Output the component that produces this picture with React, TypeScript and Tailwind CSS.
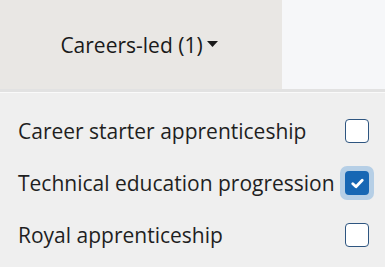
const items = [
  { label: 'Career starter apprenticeship', checked: false },
  { label: 'Technical education progression', checked: true },
  { label: 'Royal apprenticeship', checked: false },
];

const Checkbox = ({ checked }: { checked: boolean }) => {
  if (checked) {
    return (
      <span className="flex h-[34px] w-[34px] shrink-0 items-center justify-center rounded-[7px] bg-[#b6cfe6]">
        <span className="flex h-[24px] w-[24px] items-center justify-center rounded-[4px] bg-[#1767b4]">
          <svg width="13" height="11" viewBox="0 0 13 11" fill="none">
            <path d="M1.8 5.8 L5 8.8 L11.2 2.2" stroke="white" strokeWidth="2.8" strokeLinecap="round" strokeLinejoin="round" />
          </svg>
        </span>
      </span>
    );
  }
  return (
    <span className="flex h-[34px] w-[34px] shrink-0 items-center justify-center">
      <span className="h-[24px] w-[24px] rounded-[4px] border border-[#2e5580] bg-white" />
    </span>
  );
};

export default function App() {
  return (
    <div className="h-[267px] w-[385px] overflow-hidden bg-[#efefef] font-['Open_Sans',sans-serif] text-[#1f1f1f]">
      <div className="flex h-[89px]">
        <div className="flex w-[282px] items-center justify-center bg-[#e9e7e4] pr-[4px] pt-[2px]">
          <span className="text-[21px] text-[#1a1a1a]">Careers-led (1)</span>
          <svg className="ml-[4px] mt-[-3px]" width="11" height="6" viewBox="0 0 11 6">
            <path d="M0 0 H11 L5.5 6 Z" fill="#1a1a1a" />
          </svg>
        </div>
        <div className="flex-1 bg-[#f6f7f9]" />
      </div>
      <div className="h-[3px] bg-[#e2e2e2]" />
      <div className="h-[1px] bg-[#fafafa]" />
      <div className="flex flex-col pt-[12px]">
        {items.map((it) => (
          <div key={it.label} className="flex h-[52px] items-center justify-between pl-[18px] pr-[11px]">
            <span className="whitespace-nowrap text-[21px] leading-none">{it.label}</span>
            <Checkbox checked={it.checked} />
          </div>
        ))}
      </div>
    </div>
  );
}
